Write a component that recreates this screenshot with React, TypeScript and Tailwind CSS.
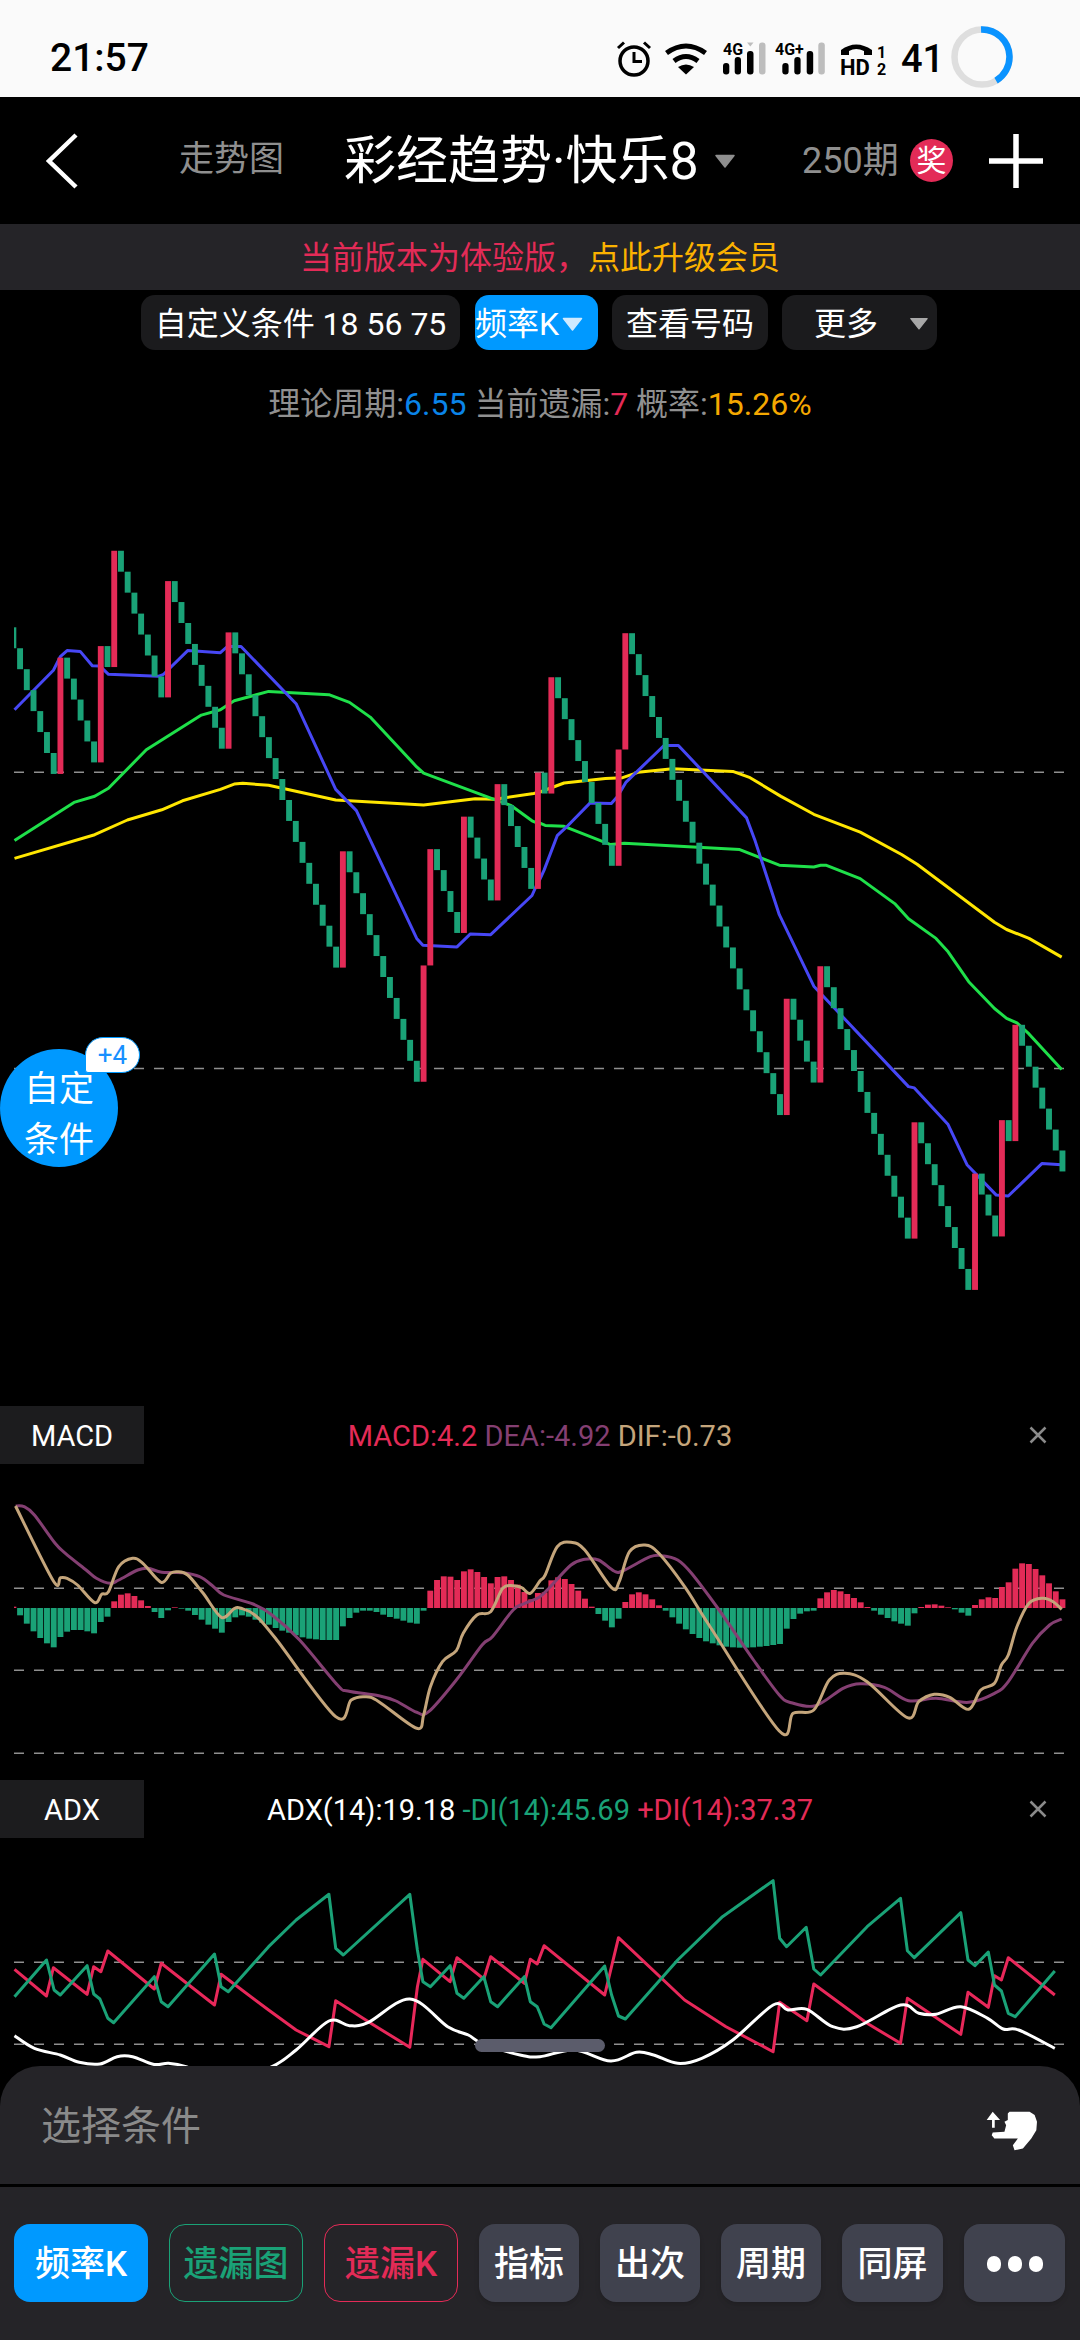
import React from "react";

type Pts = number[][];

// traces were read off zoomed crops, so they are kept in crop units and mapped to page px here
const toPage = (pts: Pts, ox: number, oy: number, sy: number): Pts =>
  pts.map(([x, y]) => [ox + x / 2.904, oy + y / sy]);

const poly = (pts: Pts) => pts.map(([x, y]) => `${x.toFixed(1)},${y.toFixed(1)}`).join(" ");

const smooth = (pts: Pts) => {
  let d = `M${pts[0][0].toFixed(1)} ${pts[0][1].toFixed(1)}`;
  for (let i = 0; i < pts.length - 1; i++) {
    const p0 = pts[Math.max(i - 1, 0)];
    const p1 = pts[i];
    const p2 = pts[i + 1];
    const p3 = pts[Math.min(i + 2, pts.length - 1)];
    const c1x = p1[0] + (p2[0] - p0[0]) / 6;
    const c1y = p1[1] + (p2[1] - p0[1]) / 6;
    const c2x = p2[0] - (p3[0] - p1[0]) / 6;
    const c2y = p2[1] - (p3[1] - p1[1]) / 6;
    d += ` C${c1x.toFixed(1)} ${c1y.toFixed(1)} ${c2x.toFixed(1)} ${c2y.toFixed(1)} ${p2[0].toFixed(1)} ${p2[1].toFixed(1)}`;
  }
  return d;
};

const RED = "#e32b57";
const GREEN = "#1aa277";
const COL_X = (i: number) => 10.4 + 6.725 * i;
const COL_W = 5.9;
const CHART_LEFT = 14;
const CHART_RIGHT = 1064;

// g = boxes going down, r = boxes going up
const runs: [string, number][] = [
  ["g", 7], ["r", 1], ["g", 5], ["r", 1], ["g", 1], ["r", 1], ["g", 7], ["r", 1], ["g", 8], ["r", 1],
  ["g", 16], ["r", 1], ["g", 11], ["r", 2], ["g", 4], ["r", 1], ["g", 4], ["r", 1], ["g", 5], ["r", 1],
  ["g", 1], ["r", 1], ["g", 9], ["r", 2], ["g", 23], ["r", 1], ["g", 4], ["r", 1], ["g", 13], ["r", 1],
  ["g", 8], ["r", 1], ["g", 3], ["r", 1], ["g", 1], ["r", 1], ["g", 7],
];

const buildBoxes = () => {
  const out: { i: number; y: number; h: number; c: string }[] = [];
  let y = 627.3;
  let i = 0;
  for (const [kind, count] of runs) {
    for (let n = 0; n < count; n++) {
      if (kind === "g") {
        out.push({ i, y, h: 20.95, c: GREEN });
        y += 20.95;
      } else {
        y -= 116.3;
        out.push({ i, y, h: 116.3, c: RED });
      }
      i++;
    }
  }
  return out;
};

const blue = [
  ...toPage([[42,465],[155,368],[175,335],[195,320],[233,322],[268,357],[290,358],[315,378],[460,383],[475,378],[545,320],[640,325],[660,310],[700,310],[860,450],[975,660],[1035,712],[1210,1025],[1228,1042],[1327,1046],[1366,1014],[1425,1016],[1545,920],[1558,895]], 0, 520, 2.45),
  ...toPage([[0,625],[12,605],[50,528],[75,510],[145,455],[207,456],[225,440],[250,408],[360,326],[402,326],[600,488],[625,540],[695,705],[795,865],[1070,1090],[1087,1093],[1185,1175],[1240,1265],[1325,1333],[1360,1335],[1458,1262],[1515,1265]], 540, 600, 2.24),
];
const lime = [
  ...toPage([[42,785],[215,692],[275,677],[315,657],[425,563],[585,478],[640,465],[680,443],[780,420],[955,428],[1015,447],[1075,483],[1210,605],[1230,620],[1437,685],[1485,700],[1545,737],[1568,745]], 0, 520, 2.45),
  ...toPage([[0,500],[15,505],[70,507],[205,548],[245,545],[445,553],[580,559],[695,594],[795,598],[815,594],[830,594],[930,624],[1030,680],[1070,714],[1150,758],[1185,788],[1245,855],[1320,915],[1355,937],[1385,947],[1420,972],[1515,1052]], 540, 600, 2.24),
];
const yellow = [
  ...toPage([[42,829],[275,771],[370,735],[470,710],[530,688],[640,660],[680,647],[705,645],[780,650],[975,686],[1230,698],[1380,683],[1437,684],[1550,670]], 0, 520, 2.45),
  ...toPage([[0,430],[70,410],[190,400],[240,398],[285,386],[385,378],[560,384],[610,398],[700,440],[795,480],[930,520],[1050,570],[1095,592],[1320,722],[1355,738],[1420,758],[1515,800]], 540, 600, 2.24),
];

// histogram heights per column, in crop units (3x)
const macdBars = [
  4,-22,-47,-70,-90,-106,-118,-87,-71,-66,-66,-70,-76,-42,-26,20,40,44,36,23,6,-12,-30,-7,2,-2,-8,-21,-35,-50,-62,-74,-42,-28,-22,-26,-35,-44,-50,-60,-68,-74,-82,-88,-92,-94,-96,-96,-96,-55,-30,-14,-8,-8,-12,-20,-27,-32,-38,-44,-47,-8,52,84,95,94,84,110,116,108,93,74,93,95,84,70,48,26,45,
  47,83,92,87,72,52,28,4,-18,-38,-58,-32,18,41,47,41,26,8,-8,-28,-47,-64,-78,-90,-100,-106,-112,-116,-118,-119,-119,-118,-116,-114,-111,-108,-62,-33,-17,-10,-8,29,47,54,50,42,30,17,3,-8,-20,-30,-40,-47,-53,-16,3,10,11,7,2,-4,-14,-23,9,26,32,30,63,77,118,134,132,117,98,74,50,26,
];
const purple = [
  ...toPage([[45,318],[70,320],[100,345],[160,430],[190,460],[250,510],[280,535],[320,550],[345,540],[400,510],[430,505],[470,517],[530,518],[580,530],[620,560],[650,585],[735,612],[790,645],[870,720],[980,855],[1010,873],[1100,887],[1150,903],[1210,937],[1245,935],[1325,840],[1400,735],[1430,710],[1490,630],[1520,612],[1568,590]], 0, 1400, 3),
  ...toPage([[30,560],[90,495],[130,478],[170,480],[215,513],[240,513],[320,470],[355,467],[400,480],[440,520],[520,630],[620,780],[695,885],[730,908],[800,917],[880,865],[930,851],[1000,862],[1070,902],[1150,895],[1245,907],[1320,880],[1360,845],[1430,730],[1480,675],[1515,657]], 540, 1400, 3),
];
const tan = [
  ...toPage([[45,318],[155,543],[175,533],[195,535],[225,555],[275,608],[295,583],[315,575],[345,500],[385,475],[415,490],[468,547],[495,520],[515,515],[545,525],[590,580],[643,652],[680,626],[700,625],[740,645],[800,715],[975,950],[1020,900],[1060,890],[1100,905],[1210,985],[1230,945],[1250,860],[1285,785],[1325,752],[1345,700],[1385,645],[1425,635],[1460,565],[1490,557],[1515,563],[1540,580],[1568,543]], 0, 1400, 3),
  ...toPage([[15,525],[50,440],[90,427],[130,450],[208,563],[230,545],[260,455],[305,435],[345,460],[420,560],[500,690],[695,993],[735,940],[795,930],[840,840],[885,820],[950,845],[1067,953],[1100,905],[1145,883],[1190,892],[1245,928],[1280,870],[1320,850],[1340,795],[1360,765],[1385,680],[1420,610],[1460,595],[1490,605],[1515,628]], 540, 1400, 3),
];

const adxGreen = [
  ...toPage([[42,650],[135,540],[157,630],[175,645],[253,557],[272,642],[290,657],[313,715],[330,728],[448,590],[468,665],[488,680],[623,522],[642,620],[663,635],[780,500],[860,420],[955,343],[975,505],[997,525],[1190,343],[1212,510],[1228,605],[1250,620],[1307,557],[1327,640],[1347,655],[1405,590],[1425,665],[1445,680],[1523,590],[1540,665],[1560,680],[1568,700]], 0, 1780, 3),
  ...toPage([[12,732],[32,743],[188,558],[208,645],[228,708],[248,717],[400,540],[530,410],[677,302],[696,475],[716,500],[773,442],[795,567],[815,585],[950,440],[1047,355],[1067,512],[1087,533],[1222,398],[1243,540],[1263,557],[1302,516],[1320,615],[1340,633],[1360,700],[1380,710],[1495,573]], 540, 1780, 3),
];
const adxRed = [
  ...toPage([[42,568],[135,648],[155,563],[253,643],[272,560],[293,575],[313,513],[448,627],[468,550],[623,675],[642,583],[780,690],[860,750],[955,800],[975,662],[1085,735],[1190,802],[1212,620],[1228,538],[1307,605],[1327,533],[1405,597],[1425,530],[1523,610],[1540,538],[1560,552],[1568,530]], 0, 1780, 3),
  ...toPage([[12,497],[188,645],[228,473],[420,660],[540,740],[677,815],[696,667],[775,722],[795,612],[950,730],[1047,790],[1067,655],[1222,763],[1243,637],[1302,682],[1320,587],[1340,600],[1360,533],[1495,645]], 540, 1780, 3),
];
const adxWhite = [
  ...toPage([[42,767],[100,805],[175,825],[230,847],[290,852],[340,830],[385,830],[445,853],[490,850],[540,860],[660,905],[790,860],[860,810],[955,723],[1015,737],[1070,727],[1190,657],[1300,740],[1360,765],[1400,790],[1510,825],[1568,830]], 0, 1780, 3),
  ...toPage([[100,810],[205,843],[280,817],[330,825],[400,850],[470,835],[560,780],[677,675],[720,690],[775,688],[850,740],[920,740],[1047,675],[1100,700],[1150,703],[1222,680],[1300,715],[1345,747],[1390,750],[1495,805]], 540, 1780, 3),
];

const DashLine = ({ y }: { y: number }) => (
  <line x1={CHART_LEFT} x2={CHART_RIGHT} y1={y} y2={y} stroke="#8f8f8f" strokeWidth={1.5} strokeDasharray="10 10" />
);

const Tri = ({ color, className }: { color: string; className?: string }) => (
  <svg viewBox="0 0 20 14" className={className}>
    <path d="M1 1.5 H19 L10 13 Z" fill={color} stroke={color} strokeWidth={1.5} strokeLinejoin="round" />
  </svg>
);

const CloseIcon = () => (
  <svg viewBox="0 0 18 18" className="w-[18px] h-[18px]">
    <path d="M1.5 1.5 L16.5 16.5 M16.5 1.5 L1.5 16.5" stroke="#8a8a8a" strokeWidth={2.5} />
  </svg>
);

const Signal = ({ label, width, bars, tri }: { label: string; width: number; bars: number[]; tri?: boolean }) => (
  <svg width={width} height={42} viewBox={`0 -4 ${width} 42`}>
    <text x={0} y={12.5} fontSize={16} fontWeight={700} fontFamily="Roboto, sans-serif" fill="#000">
      {label}
    </text>
    <rect x={bars[0]} y={21} width={6.3} height={11.5} rx={3} fill="#000" />
    <rect x={bars[1]} y={15} width={6.3} height={17.5} rx={3} fill="#000" />
    <rect x={bars[2]} y={9} width={6.5} height={23.5} rx={3} fill="#000" />
    <rect x={bars[3]} y={0.5} width={6.5} height={32} rx={3} fill="#bdbdbd" />
    {tri && <path d={`M${bars[2]} 0.5 h6.5 l-3.2 4 Z`} fill="#bdbdbd" />}
  </svg>
);

const StatusBar = () => (
  <div className="flex items-center h-[97px] pt-[20px] bg-[#fafafa] text-black">
    <span className="ml-[50px] w-[566px] text-[39px] font-medium leading-none">21:57</span>
    <svg width={36} height={36} viewBox="0 0 36 36" fill="none" stroke="#000">
      <circle cx={18} cy={20} r={14} strokeWidth={3.5} />
      <path d="M18 11 V20.5 H26" strokeWidth={3} />
      <path d="M2 7 L8 1.5 M34 7 L28 1.5" strokeWidth={3} />
    </svg>
    <svg width={42} height={32} viewBox="0 0 42 32" fill="none" stroke="#000" className="ml-[13px]">
      <path d="M1.5 10 Q21 -4 40.5 10" strokeWidth={5} />
      <path d="M9 18 Q21 9 33 18" strokeWidth={5} />
      <path d="M21 31.5 L13 24 Q21 19 29 24 Z" fill="#000" stroke="none" />
    </svg>
    <div className="ml-[16px] flex">
      <Signal label="4G" width={43} bars={[0, 11.7, 24, 36]} tri />
    </div>
    <div className="ml-[9px] flex">
      <Signal label="4G+" width={50} bars={[7.3, 19.3, 31.7, 43.3]} />
    </div>
    <svg width={46} height={42} viewBox="0 -4 46 42" className="ml-[15px]">
      <path d="M1 13 V8 Q16 -3 32 8 V13 H24 V9 Q16 5 9 9 V13 Z" fill="#000" />
      <text x={0} y={32.5} fontSize={22} fontWeight={700} fontFamily="Roboto, sans-serif" fill="#000">
        HD
      </text>
      <text x={37} y={16} fontSize={16} fontWeight={700} fontFamily="Roboto, sans-serif" fill="#000">
        1
      </text>
      <text x={37} y={32.5} fontSize={16} fontWeight={700} fontFamily="Roboto, sans-serif" fill="#000">
        2
      </text>
    </svg>
    <span className="ml-[15px] w-[40px] text-[38px] font-medium leading-none">41</span>
    <svg width={62} height={62} viewBox="0 0 62 62" fill="none" strokeWidth={6.5} className="ml-[10px] -mt-[3px]">
      <circle cx={31} cy={31} r={27.5} stroke="#dedede" />
      <circle
        cx={31}
        cy={31}
        r={27.5}
        stroke="#0a93ff"
        pathLength={100}
        strokeDasharray="42 100"
        transform="rotate(-92 31 31)"
      />
    </svg>
  </div>
);

const Header = () => (
  <div className="flex items-center h-[127px] pl-[46px] bg-black">
    <svg width={32} height={56} viewBox="0 0 32 56" fill="none" className="shrink-0">
      <path d="M30 2 L3 28 L30 54" stroke="#fff" strokeWidth={4.5} />
    </svg>
    <span className="ml-[101px] w-[103px] shrink-0 text-[35px] text-[#8f8f8f] whitespace-nowrap">走势图</span>
    <span className="ml-[62px] w-[353px] shrink-0 pt-[2px] text-[52px] text-white whitespace-nowrap">彩经趋势·快乐8</span>
    <Tri color="#8e8e8e" className="ml-[18px] w-[20px] h-[14px] shrink-0" />
    <span className="ml-[67px] w-[93px] shrink-0 text-[36px] text-[#8f8f8f] whitespace-nowrap">250期</span>
    <span className="ml-[15px] w-[43px] h-[43px] shrink-0 rounded-full bg-[#e32b57] text-[30px] leading-none text-white flex items-center justify-center">
      奖
    </span>
    <svg width={54} height={54} viewBox="0 0 54 54" className="ml-[36px] shrink-0">
      <path d="M27 0 V54 M0 27 H54" stroke="#fff" strokeWidth={5.5} />
    </svg>
  </div>
);

const Notice = () => (
  <div className="flex items-center justify-center h-[66px] pt-[2px] bg-[#252428] text-[32px]">
    <span className="text-[#e32b57]">当前版本为体验版，</span>
    <span className="text-[#fbb200]">点此升级会员</span>
  </div>
);

const FilterRow = () => (
  <div className="flex items-center pt-[5px] pl-[141px] text-[32px] leading-none text-white">
    <div className="flex items-center justify-center pt-[2px] w-[319px] h-[55px] rounded-[14px] bg-[#1b1b1d] whitespace-nowrap">
      自定义条件 18 56 75
    </div>
    <div className="flex items-center pt-[2px] ml-[15px] w-[123px] h-[55px] rounded-[14px] bg-[#0099ff] whitespace-nowrap">
      频率K
      <Tri color="#cfeaff" className="ml-[2px] w-[23px] h-[14px]" />
    </div>
    <div className="flex items-center justify-center pt-[2px] ml-[14px] w-[156px] h-[55px] rounded-[14px] bg-[#1b1b1d]">
      查看号码
    </div>
    <div className="flex items-center pt-[2px] ml-[14px] pl-[32px] w-[155px] h-[55px] rounded-[14px] bg-[#1b1b1d]">
      更多
      <Tri color="#a8a8a8" className="ml-[32px] w-[18px] h-[13px]" />
    </div>
  </div>
);

const Stats = () => (
  <div className="flex items-center justify-center h-[80px] pt-[28px] text-[32px] text-[#909090] whitespace-pre">
    理论周期:<span className="text-[#0a84e8]">6.55</span> 当前遗漏:<span className="text-[#e32b57]">7</span> 概率:
    <span className="text-[#f5a800]">15.26%</span>
  </div>
);

const MainChart = () => {
  const boxes = buildBoxes();
  return (
    <div className="relative h-[976px]">
      <svg viewBox="0 430 1080 976" className="block w-[1080px] h-[976px]">
        <DashLine y={772.2} />
        <DashLine y={1068.5} />
        <polyline points={poly(yellow)} fill="none" stroke="#ffe600" strokeWidth={3} strokeLinejoin="round" />
        <polyline points={poly(lime)} fill="none" stroke="#1fe04a" strokeWidth={3} strokeLinejoin="round" />
        <polyline points={poly(blue)} fill="none" stroke="#4747f5" strokeWidth={3} strokeLinejoin="round" />
        {boxes.map((b) => {
          const x = Math.max(COL_X(b.i), CHART_LEFT);
          return <rect key={b.i} x={x} y={b.y} width={COL_X(b.i) + COL_W - x} height={b.h} fill={b.c} />;
        })}
      </svg>
      <div className="absolute left-0 top-[619px] w-[118px] h-[118px] pt-[14px] rounded-full bg-[#0099ff] flex flex-col items-center justify-center text-[35px] leading-[51px] text-white">
        <span>自定</span>
        <span>条件</span>
      </div>
      <div className="absolute left-[85px] top-[607px] w-[55px] h-[36px] rounded-[18px] rounded-bl-[3px] border border-[#0099ff] bg-white flex items-center justify-center text-[26px] leading-none text-[#1890ff]">
        +4
      </div>
    </div>
  );
};

const PanelHead = ({ title, children }: { title: string; children: React.ReactNode }) => (
  <div className="grid grid-cols-[144px_1fr_144px] items-center h-[58px]">
    <div className="flex items-center justify-center h-full pt-[3px] bg-[#1c1c1e] text-[29px] text-white">{title}</div>
    <div className="flex justify-center pt-[3px] text-[29px] whitespace-pre">{children}</div>
    <div className="flex justify-end pr-[33px]">
      <CloseIcon />
    </div>
  </div>
);

const MacdChart = () => (
  <svg viewBox="0 1464 1080 316" className="block w-[1080px] h-[316px]">
    <DashLine y={1588.3} />
    <DashLine y={1670.3} />
    <DashLine y={1753.3} />
    {macdBars.map((v, i) => {
      const h = Math.abs(v) / 3;
      const x = Math.max(COL_X(i), CHART_LEFT);
      return (
        <rect
          key={i}
          x={x}
          y={v > 0 ? 1608 - h : 1608}
          width={COL_X(i) + COL_W - x}
          height={h}
          fill={v > 0 ? RED : GREEN}
        />
      );
    })}
    <path d={smooth(purple)} fill="none" stroke="#843f72" strokeWidth={3} />
    <path d={smooth(tan)} fill="none" stroke="#c4a57b" strokeWidth={3} />
  </svg>
);

const AdxChart = () => (
  <div className="relative h-[228px] overflow-hidden">
    <svg viewBox="0 1838 1080 228" className="block w-[1080px] h-[228px]">
      <DashLine y={1962.3} />
      <DashLine y={2044.3} />
      <polyline points={poly(adxRed)} fill="none" stroke="#e8285a" strokeWidth={3} strokeLinejoin="round" />
      <polyline points={poly(adxGreen)} fill="none" stroke="#1aa277" strokeWidth={3} strokeLinejoin="round" />
      <path d={smooth(adxWhite)} fill="none" stroke="#fff" strokeWidth={3} />
    </svg>
    <div className="absolute left-[475px] top-[201px] w-[130px] h-[13px] rounded-full bg-[#5b5c6b]" />
  </div>
);

const toolBtn =
  "flex items-center justify-center h-[78px] pt-[2px] rounded-[16px] text-[35px] font-medium leading-none whitespace-nowrap";

const BottomPanel = () => (
  <div className="h-[274px] rounded-t-[40px] bg-[#252428]">
    <div className="flex items-center justify-between h-[118px] pl-[41px] pr-[42px]">
      <span className="pt-[3px] text-[40px] text-[#8a8a8a]">选择条件</span>
      <svg width={52} height={42} viewBox="80 50 155 125" className="mt-[12px]">
        <path d="M100 55 L122 80 H106 V103 H98 V80 H82 Z" fill="#fff" />
        <path
          d="M145 60 L150 55 H210 L225 65 L232 85 L230 110 L215 135 L190 165 L165 170 L160 155 L175 135 H105 L97 125 L100 117 L135 115 L140 95 L135 85 L145 80 Z"
          fill="#fff"
        />
      </svg>
    </div>
    <div className="h-[3px] bg-black" />
    <div className="flex gap-[21px] pt-[37px] pl-[14px]">
      <div className={`${toolBtn} w-[134px] bg-[#0099ff] text-white`}>频率K</div>
      <div className={`${toolBtn} w-[134px] border border-[#1aa277] text-[#1aa277]`}>遗漏图</div>
      <div className={`${toolBtn} w-[134px] border border-[#e32b57] text-[#e32b57]`}>遗漏K</div>
      <div className={`${toolBtn} w-[100px] bg-[#40424e] text-white shadow-md`}>指标</div>
      <div className={`${toolBtn} w-[100px] bg-[#40424e] text-white shadow-md`}>出次</div>
      <div className={`${toolBtn} w-[100px] bg-[#40424e] text-white shadow-md`}>周期</div>
      <div className={`${toolBtn} w-[101px] bg-[#40424e] text-white shadow-md`}>同屏</div>
      <div className={`${toolBtn} w-[101px] gap-[7px] bg-[#40424e] shadow-md`}>
        <span className="w-[14px] h-[16px] rounded-full bg-white" />
        <span className="w-[14px] h-[16px] rounded-full bg-white" />
        <span className="w-[14px] h-[16px] rounded-full bg-white" />
      </div>
    </div>
  </div>
);

export default function App() {
  return (
    <div className="w-[1080px] h-[2340px] overflow-hidden bg-black font-['Roboto','Noto_Sans_CJK_SC',sans-serif]">
      <StatusBar />
      <Header />
      <Notice />
      <FilterRow />
      <Stats />
      <MainChart />
      <PanelHead title="MACD">
        <span className="text-[#e32b57]">MACD:4.2 </span>
        <span className="text-[#843f72]">DEA:-4.92 </span>
        <span className="text-[#c4a57b]">DIF:-0.73</span>
      </PanelHead>
      <MacdChart />
      <PanelHead title="ADX">
        <span className="text-white">ADX(14):19.18 </span>
        <span className="text-[#1aa277]">-DI(14):45.69 </span>
        <span className="text-[#e32b57]">+DI(14):37.37</span>
      </PanelHead>
      <AdxChart />
      <BottomPanel />
    </div>
  );
}
